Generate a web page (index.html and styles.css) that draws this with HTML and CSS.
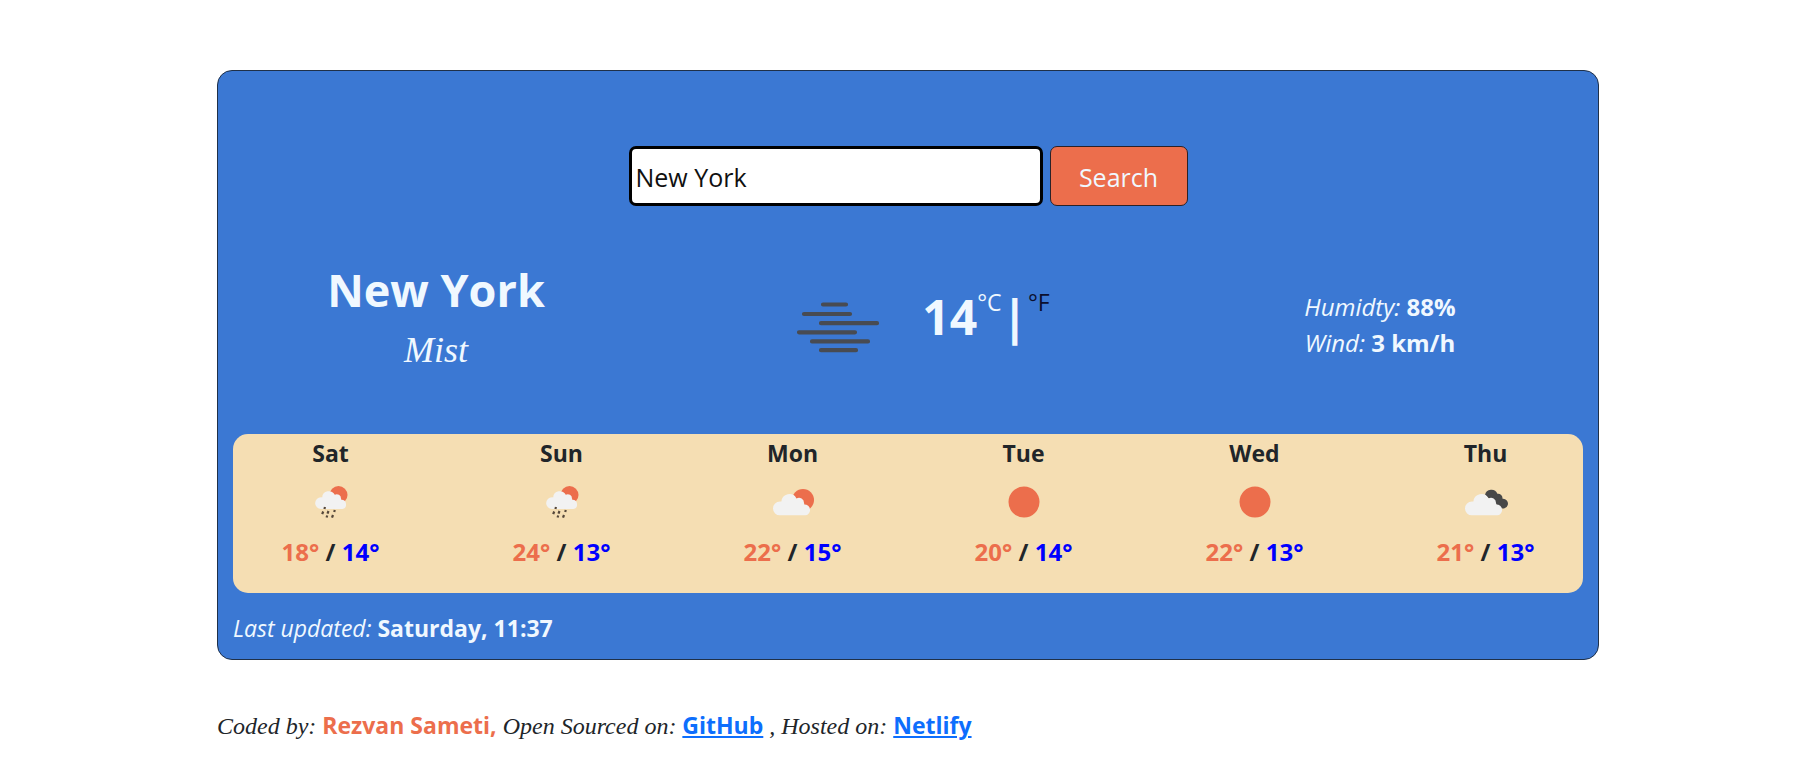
FILE: index.html
```html
<!DOCTYPE html>
<html lang="en">
<head>
<meta charset="utf-8">
<title>Weather</title>
<link rel="stylesheet" href="styles.css">
</head>
<body>
<svg class="sprite" aria-hidden="true">
  <symbol id="cloud" viewBox="0 0 38 24">
    <path d="M7 24a7 7 0 0 1 0-14c.5 0 1 0 1.400.1A8 8 0 0 1 23.500 7A5 5 0 0 1 31 11.500c.2.400.3.900.3 1.400A5.600 5.600 0 0 1 32.500 24Z"/>
  </symbol>
  <symbol id="rain" viewBox="0 0 60 60">
    <circle cx="37.500" cy="21" r="9" fill="#ec6e4c"/>
    <use href="#cloud" x="13" y="15" width="34" height="20" fill="#f2f2f2"/>
    <path d="M24 33l-.6 2M22.200 37.500l-1 2.700M27.500 37l-1 2.700M33.800 36l-.6 2M26.200 41.500l-.6 2M32 41l-1 2.700" stroke="#55473a" stroke-width="2.200" fill="none"/>
  </symbol>
  <symbol id="partly" viewBox="0 0 60 60">
    <circle cx="40" cy="26" r="11" fill="#ec6e4c"/>
    <use href="#cloud" x="9" y="17.500" width="40" height="24" fill="#f2f2f2"/>
  </symbol>
  <symbol id="sun" viewBox="0 0 60 60">
    <circle cx="30" cy="28" r="15.500" fill="#ec6e4c"/>
  </symbol>
  <symbol id="clouds" viewBox="0 0 60 60">
    <path d="M29 21a6.500 6.500 0 0 1 12.400-1.200A4.500 4.500 0 0 1 46.500 24.800A4.900 4.900 0 1 1 44 33.500Z" fill="#484848"/>
    <use href="#cloud" x="8" y="17.500" width="40" height="24" fill="#f2f2f2"/>
  </symbol>
</svg>
<main class="page">
  <section class="card">
    <form class="search">
      <input class="search-input" type="text" value="New York" aria-label="City">
      <button class="search-button" type="button">Search</button>
    </form>
    <div class="current">
      <div class="place">
        <h1 class="city">New York</h1>
        <p class="description">Mist</p>
      </div>
      <div class="now">
        <svg class="now-icon" viewBox="0 0 144 60" role="img" aria-label="Mist">
          <path d="M57 7.500h23M38 17h46M55 26.200h56M33 35.300h56M46 44.400h56M55 53.200h35" stroke="#484b52" stroke-width="4.200" stroke-linecap="round"/>
        </svg>
        <div class="temperature">
          <strong class="degrees">14</strong><a class="unit unit-active">°C</a><strong class="degrees">|</strong><a class="unit" href="#fahrenheit">°F</a>
        </div>
      </div>
      <div class="stats">
        <div><em>Humidty:</em> <strong>88%</strong></div>
        <div><em>Wind:</em> <strong>3 km/h</strong></div>
      </div>
    </div>
    <div class="forecast">
      <div class="days">
        <div class="day"><div>Sat</div><svg class="day-icon"><use href="#rain"/></svg><div class="range"><span class="high">18°</span> / <span class="low">14°</span></div></div>
        <div class="day"><div>Sun</div><svg class="day-icon"><use href="#rain"/></svg><div class="range"><span class="high">24°</span> / <span class="low">13°</span></div></div>
        <div class="day"><div>Mon</div><svg class="day-icon"><use href="#partly"/></svg><div class="range"><span class="high">22°</span> / <span class="low">15°</span></div></div>
        <div class="day"><div>Tue</div><svg class="day-icon"><use href="#sun"/></svg><div class="range"><span class="high">20°</span> / <span class="low">14°</span></div></div>
        <div class="day"><div>Wed</div><svg class="day-icon"><use href="#sun"/></svg><div class="range"><span class="high">22°</span> / <span class="low">13°</span></div></div>
        <div class="day"><div>Thu</div><svg class="day-icon"><use href="#clouds"/></svg><div class="range"><span class="high">21°</span> / <span class="low">13°</span></div></div>
      </div>
    </div>
    <p class="updated"><em>Last updated:</em> <strong>Saturday, 11:37</strong></p>
  </section>
  <footer class="credits">
    <em>Coded by:</em> <strong class="author">Rezvan Sameti,</strong> <em>Open Sourced on:</em> <a class="credit-link" href="#github">GitHub</a> <em>, Hosted on:</em> <a class="credit-link" href="#netlify">Netlify</a>
  </footer>
</main>
</body>
</html>
```
FILE: styles.css
```css
* {
  box-sizing: border-box;
}

body {
  margin: 0;
  background: #fff;
  color: #212529;
  font-family: "Open Sans", "Noto Sans", sans-serif;
  font-size: 23px;
  line-height: 36px;
}

h1,
p {
  margin: 0;
}

.sprite {
  display: none;
}

.page {
  padding: 70px 200px 0 217px;
}

.card {
  padding: 75px 15px 13px;
  border: 1px solid #1f3048;
  border-radius: 15px;
  background: #3b78d3;
  color: aliceblue;
}

.search {
  display: flex;
  justify-content: center;
  gap: 7px;
}

.search-input,
.search-button {
  height: 60px;
  border-radius: 7px;
  font: inherit;
  font-size: 25px;
}

.search-input {
  width: 414px;
  padding: 2px 4px 0;
  border: 3px solid #000;
  background: #fff;
  color: #101010;
  outline: none;
}

.search-button {
  width: 138px;
  padding: 2px 0 0;
  border: 1px solid #2b2228;
  background: #ec6e4c;
  color: aliceblue;
}

.current {
  display: grid;
  grid-template-columns: repeat(3, 1fr);
  align-items: center;
  justify-items: center;
  min-height: 228px;
  margin: 0 -33px;
}

.place {
  text-align: center;
}

.city {
  font-size: 45px;
  font-weight: 700;
  line-height: 60px;
}

.description {
  font-family: "Liberation Serif", serif;
  font-size: 36px;
  font-style: italic;
  line-height: 60px;
}

.now {
  display: flex;
  align-items: center;
  gap: 12px;
}

.now-icon {
  width: 144px;
  height: 60px;
  margin-top: 14px;
}

.temperature {
  display: flex;
  align-items: flex-start;
  padding-bottom: 7px;
}

.degrees {
  font-size: 48px;
  line-height: 60px;
}

.unit {
  color: #0b0f2e;
  line-height: 30px;
  text-decoration: none;
}

.unit-active {
  color: aliceblue;
}

.stats {
  padding-top: 10px;
  font-size: 24px;
  text-align: center;
}

.forecast {
  padding: 1px 0 23px;
  border-radius: 15px;
  background: wheat;
  color: #212529;
  font-weight: 700;
}

.days {
  display: grid;
  grid-template-columns: repeat(6, 1fr);
  margin: 0 -18px;
}

.day {
  display: flex;
  flex-direction: column;
  align-items: center;
}

.day-icon {
  width: 60px;
  height: 60px;
  margin: 3px 0 0;
}

.range {
  font-size: 24px;
}

.high {
  color: #ec6e4c;
}

.low {
  color: #00f;
}

.updated {
  padding-top: 17px;
}

.credits {
  padding-top: 47px;
}

.credits em {
  font-family: "Liberation Serif", serif;
  font-size: 24px;
}

.author {
  color: #ec6e4c;
}

.credit-link {
  color: #0d6efd;
  font-weight: 700;
}
```
